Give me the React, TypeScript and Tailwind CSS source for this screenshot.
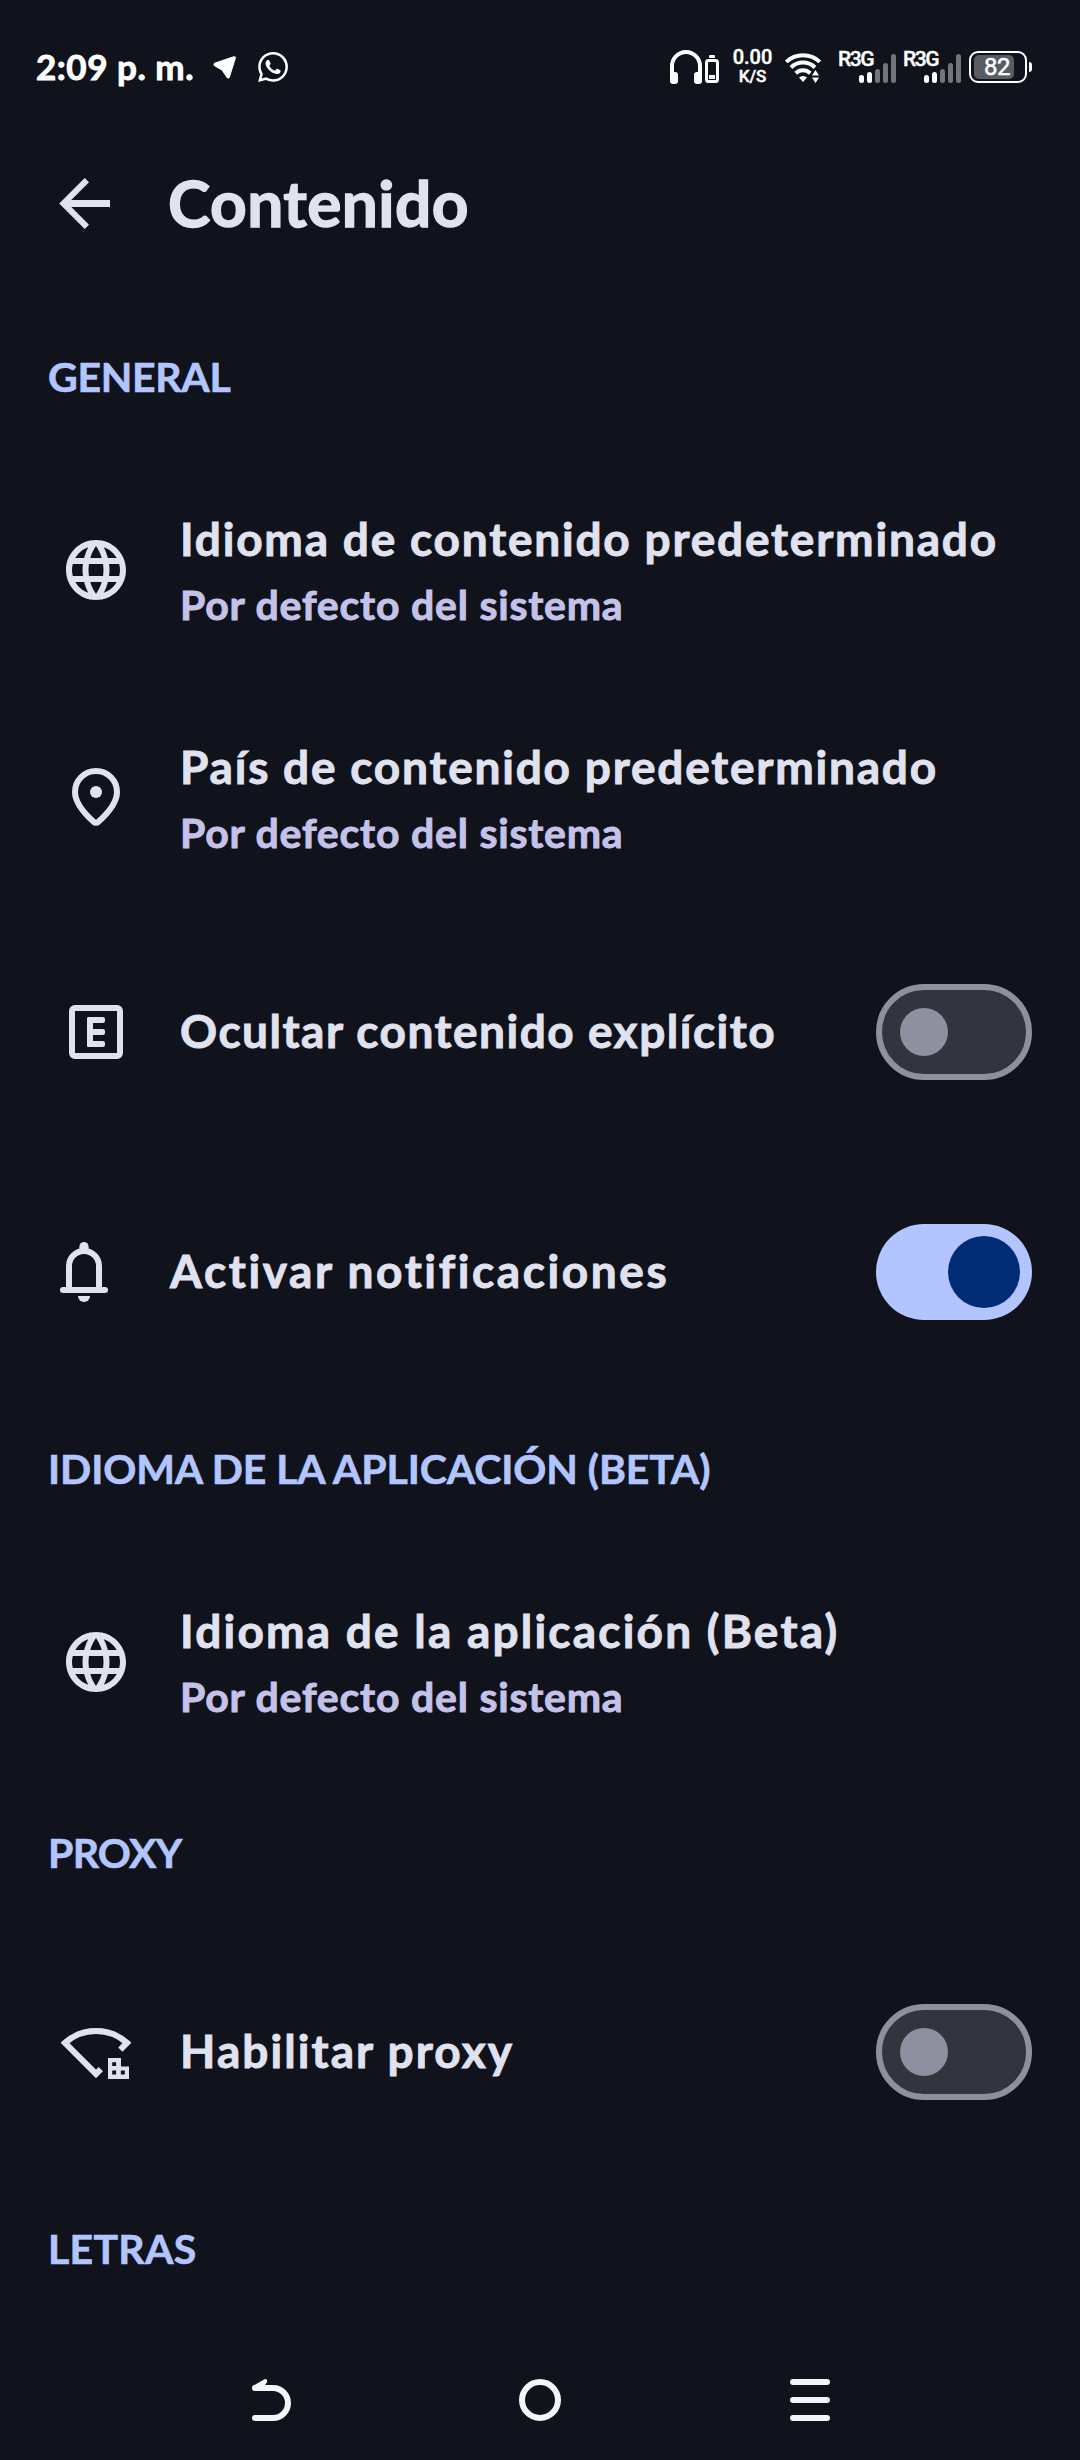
import type { ReactNode } from "react";
import { MdLanguage } from "react-icons/md";
import { SiWhatsapp } from "react-icons/si";

function Icon({ children }: { children: ReactNode }) {
  return (
    <svg viewBox="0 0 24 24" className="h-[72px] w-[72px] shrink-0" fill="none" stroke="currentColor" strokeWidth="2">
      {children}
    </svg>
  );
}

function Globe() {
  return <MdLanguage className="h-[72px] w-[72px] shrink-0" />;
}

function Pin() {
  return (
    <Icon>
      <path d="M12 3a7 7 0 0 1 7 7c0 3.3-2.8 6.9-6.3 10a1 1 0 0 1-1.4 0C7.8 16.9 5 13.3 5 10a7 7 0 0 1 7-7z" />
      <circle cx="12" cy="10" r="2" fill="currentColor" stroke="none" />
    </Icon>
  );
}

function Explicit() {
  return (
    <Icon>
      <rect x="4" y="4" width="16" height="16" rx="1" strokeLinejoin="round" />
      <g fill="currentColor" stroke="none">
        <rect x="9" y="7" width="2" height="10" rx="0.5" />
        <rect x="9" y="7" width="6" height="2" rx="0.7" />
        <rect x="9" y="11" width="6" height="2" rx="0.7" />
        <rect x="9" y="15" width="6" height="2" rx="0.7" />
      </g>
    </Icon>
  );
}

function Bell() {
  return (
    <Icon>
      <path d="M7 18v-8a5 5 0 0 1 10 0v8" />
      <path d="M5 18h14" strokeLinecap="round" />
      <g fill="currentColor" stroke="none">
        <rect x="10.5" y="2" width="3" height="3" rx="1.5" />
        <rect x="10.5" y="3.5" width="3" height="1.6" />
        <path d="M10 20h4a2 2 0 0 1-4 0z" />
      </g>
    </Icon>
  );
}

function WifiProxy() {
  return (
    <Icon>
      <path d="M13.6 17.7 12 19.3 1.65 8.95a15.6 15.6 0 0 1 20.7 0L20.1 11.2" />
      <path
        d="M16 14h4.33v2.8H23V21h-7zM17.4 15.4v1.3h1.3v-1.3zM17.4 18.2v1.3h1.3v-1.3zM20.3 18.2v1.3h1.3v-1.3z"
        fill="currentColor"
        fillRule="evenodd"
        stroke="none"
      />
    </Icon>
  );
}

function Switch({ on }: { on?: boolean }) {
  return on ? (
    <div className="flex h-24 w-[156px] shrink-0 items-center justify-end rounded-full bg-[#b3c5ff] pr-3">
      <div className="size-[72px] rounded-full bg-[#002b75]" />
    </div>
  ) : (
    <div className="flex h-24 w-[156px] shrink-0 items-center rounded-full border-[6px] border-[#8f909f] bg-[#32343e] pl-[18px]">
      <div className="size-12 rounded-full bg-[#8f909f]" />
    </div>
  );
}

function Heading({ children, className }: { children: string; className: string }) {
  return (
    <h2 className={`flex h-[156px] items-center pb-[3px] pl-12 text-[41px] font-bold whitespace-nowrap text-[#b3c5ff] [-webkit-text-stroke:0.6px] ${className}`}>
      {children}
    </h2>
  );
}

function LinkRow({ icon, title, className }: { icon: ReactNode; title: string; className: string }) {
  return (
    <div className="flex h-[228px] items-center gap-12 pl-[60px]">
      {icon}
      <div className="pt-[3px] font-bold whitespace-nowrap">
        <div className={`text-[46px] leading-[66px] ${className}`}>{title}</div>
        <div className="text-[41px] leading-[66px] tracking-[0.78px] text-[#c5c2ea]">Por defecto del sistema</div>
      </div>
    </div>
  );
}

function SwitchRow({ icon, title, on, className, textClass }: { icon: ReactNode; title: string; on?: boolean; className: string; textClass: string }) {
  return (
    <div className={`flex h-60 items-center pr-12 ${className}`}>
      {icon}
      <div className={`flex-1 pb-[3px] text-[46px] font-bold whitespace-nowrap ${textClass}`}>{title}</div>
      <Switch on={on} />
    </div>
  );
}

function Signal() {
  return (
    <div className="relative h-8 w-[57px]">
      <span className="absolute top-[-3px] left-[-1px] font-['Roboto'] text-[21px] leading-[22px] font-medium tracking-[-1.4px] [-webkit-text-stroke:0.4px]">R3G</span>
      <div className="flex h-full items-end justify-end gap-[3px]">
        <div className="h-2 w-[5px] rounded-sm bg-white" />
        <div className="h-[11px] w-[5px] rounded-sm bg-white" />
        <div className="h-3.5 w-[5px] rounded-sm bg-[#74757b]" />
        <div className="h-5 w-[5px] rounded-sm bg-[#74757b]" />
        <div className="h-[29px] w-[5px] rounded-sm bg-[#74757b]" />
      </div>
    </div>
  );
}

function StatusBar() {
  return (
    <div className="flex h-[134px] items-center pr-12 pl-9 text-white">
      <span className="w-[177px] pb-0.5 text-[35px] font-bold tracking-[0.53px] whitespace-nowrap">2:09 p. m.</span>
      <svg width="24" height="24" viewBox="0 0 24 24" fill="currentColor" stroke="currentColor" strokeWidth="2" strokeLinejoin="round">
        <path d="M1.8 8.8 21 2.2c.8-.2 1 .2.8.9L16 21.8c-.3 1-1.1 1-1.6.2L9.5 14.6 2 10.3c-.7-.5-.7-1.2-.2-1.5z" />
      </svg>
      <SiWhatsapp className="ml-[21px] size-[30px]" />
      <div className="flex flex-1 items-center justify-end">
        <svg width="52" height="38" viewBox="0 0 52 38" fill="none" stroke="currentColor">
          <path d="M4 30V18a14 14 0 0 1 28 0v12" strokeWidth="4" />
          <g fill="currentColor" stroke="none">
            <rect x="2" y="24" width="8" height="12" rx="3" />
            <rect x="26" y="24" width="8" height="12" rx="3" />
            <rect x="41" y="7" width="6" height="3" rx="1" />
            <rect x="41" y="27" width="6" height="4" />
          </g>
          <rect x="38.5" y="12.5" width="11" height="21" rx="2" strokeWidth="3" />
        </svg>
        <div className="ml-3 w-[41px] text-center font-['Roboto'] leading-[19px] font-medium [-webkit-text-stroke:0.4px]">
          <div className="text-[20px]">0.00</div>
          <div className="text-[17px]">K/S</div>
        </div>
        <svg className="ml-[11px]" width="38" height="38" viewBox="0 0 38 38" fill="none" stroke="currentColor" strokeWidth="4">
          <path d="M2.2 13.9a24.8 24.8 0 0 1 33.6 0" />
          <path d="M7 19.5a17 17 0 0 1 24 0" />
          <path d="M11.8 25.2a10.5 10.5 0 0 1 14.4 0" />
          <g fill="currentColor" stroke="none">
            <path d="M15 29.5a6 6 0 0 1 8 0L19 34z" />
            <path d="M31.5 22l3.5 5.5h-7zM31.5 35l3.5-5.5h-7z" />
          </g>
        </svg>
        <div className="ml-[17px] flex gap-2">
          <Signal />
          <Signal />
        </div>
        <div className="ml-2 flex h-8 w-[58px] items-center rounded-[9px] border-2 border-white p-[3px]">
          <div className="flex h-6 w-10 items-center justify-end rounded-[5px] bg-[#5a5c64] pr-1 font-['Roboto'] text-[24px] tracking-[-0.5px] [-webkit-text-stroke:0.5px]">82</div>
        </div>
        <div className="ml-0.5 h-[10px] w-[3px] rounded-r-sm bg-white" />
      </div>
    </div>
  );
}

export default function App() {
  return (
    <div className="flex h-[2460px] w-[1080px] flex-col overflow-hidden bg-[#10131c] font-['Lato',sans-serif] text-[#e1e2ef] [font-variant-ligatures:none] [-webkit-text-stroke:0.9px]">
      <StatusBar />
      <header className="flex h-[166px] items-center gap-12 pb-7 pl-12">
        <svg width="72" height="72" viewBox="0 0 72 72" fill="currentColor">
          <path d="M11.2 36.5 36.7 11l4.3 4.3L23.3 33H62v7H23.3L41 57.7 36.7 62z" />
        </svg>
        <h1 className="text-[64px] font-bold tracking-[0.4px] [-webkit-text-stroke:1.4px]">Contenido</h1>
      </header>
      <Heading className="tracking-[-0.3px]">GENERAL</Heading>
      <LinkRow icon={<Globe />} title="Idioma de contenido predeterminado" className="tracking-[1.79px]" />
      <LinkRow icon={<Pin />} title="País de contenido predeterminado" className="tracking-[1.78px]" />
      <SwitchRow icon={<Explicit />} title="Ocultar contenido explícito" className="gap-12 pl-[60px]" textClass="tracking-[1.5px]" />
      <SwitchRow icon={<Bell />} title="Activar notificaciones" on className="gap-[50px] pl-12" textClass="tracking-[2.6px]" />
      <Heading className="tracking-[-0.1px]">IDIOMA DE LA APLICACIÓN (BETA)</Heading>
      <LinkRow icon={<Globe />} title="Idioma de la aplicación (Beta)" className="tracking-[2.22px]" />
      <Heading className="tracking-[-0.75px]">PROXY</Heading>
      <SwitchRow icon={<WifiProxy />} title="Habilitar proxy" className="gap-12 pl-[60px]" textClass="tracking-[2.06px]" />
      <Heading className="tracking-[0.3px]">LETRAS</Heading>
      <nav className="mt-3 grid h-[120px] grid-cols-3 place-items-center px-[135px] text-[#f5f5f7]">
        <svg width="42" height="44" viewBox="0 0 42 44" fill="none" stroke="currentColor" strokeWidth="6" strokeLinecap="round" strokeLinejoin="round">
          <path d="M6 10h18a15 15 0 0 1 0 30H6" />
          <path d="M4.5 7.5 15.5 1.2c2-.9 3.3 1.3 2.3 3.3L15 8.5 6 11z" fill="currentColor" stroke="none" />
        </svg>
        <svg width="42" height="42" viewBox="0 0 42 42" fill="none" stroke="currentColor" strokeWidth="6">
          <circle cx="21" cy="21" r="18" />
        </svg>
        <div className="flex w-10 flex-col gap-3">
          <div className="h-1.5 rounded-full bg-current" />
          <div className="h-1.5 rounded-full bg-current" />
          <div className="h-1.5 rounded-full bg-current" />
        </div>
      </nav>
    </div>
  );
}
